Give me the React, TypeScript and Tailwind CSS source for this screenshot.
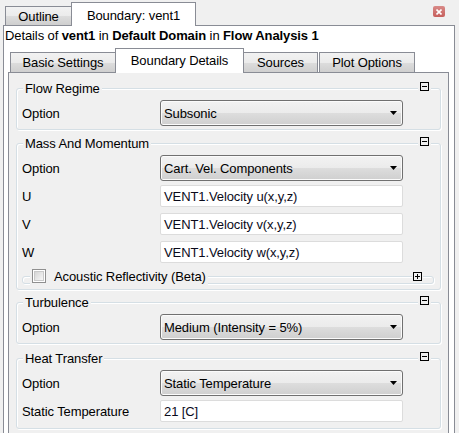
import React from "react";

function MinusIcon() {
  return (
    <svg width="9" height="9" viewBox="0 0 9 9" className="block">
      <rect x="0.5" y="0.5" width="8" height="8" fill="#f0f0f0" stroke="#000" />
      <path d="M2 4.5h5" stroke="#000" />
    </svg>
  );
}

function PlusIcon() {
  return (
    <svg width="9" height="9" viewBox="0 0 9 9" className="block">
      <rect x="0.5" y="0.5" width="8" height="8" fill="#f0f0f0" stroke="#000" />
      <path d="M2 4.5h5M4.5 2v5" stroke="#000" />
    </svg>
  );
}

function Select({ value }: { value: string }) {
  return (
    <div className="flex h-[26px] w-[243px] items-center rounded-[3px] border border-[#707070] bg-[linear-gradient(#f2f2f2,#ebebeb_50%,#dddddd_50%,#cfcfcf)] pl-[3px] shadow-[inset_0_0_0_1px_#fbfbfb]">
      <span className="pt-[1px] leading-[16px] text-black">{value}</span>
      <svg width="7" height="4" viewBox="0 0 7 4" className="ml-auto mr-[5px] block">
        <path d="M0 0h7L3.5 4z" fill="#000" />
      </svg>
    </div>
  );
}

function Input({ value }: { value: string }) {
  return (
    <div className="flex h-[22px] w-[243px] items-center rounded-[2px] border border-[#dcdcdc] bg-white pl-[3px]">
      <span className="pt-[1px] leading-[16px] text-[#0a0a1a]">{value}</span>
    </div>
  );
}

function Row({ label, children, className }: { label: string; children: React.ReactNode; className?: string }) {
  return (
    <div className={"flex items-center " + (className ?? "")}>
      <span className="w-[138px] pt-[1px] leading-[16px]">{label}</span>
      {children}
    </div>
  );
}

function Group({
  title,
  children,
  className,
}: {
  title: string;
  children: React.ReactNode;
  className: string;
}) {
  return (
    <div className={"relative rounded-[3px] border border-[#d5dfe5] shadow-[inset_1px_1px_0_#ffffff,1px_1px_0_#ffffff] " + className}>
      <span className="absolute left-[6px] top-[-8px] bg-[#f0f0f0] px-[2px] leading-[16px] text-black">{title}</span>
      <span className="absolute right-[9px] top-[-7px] bg-[#f0f0f0] px-[2px]">
        <MinusIcon />
      </span>
      {children}
    </div>
  );
}

const TAB_BG = "bg-[linear-gradient(#f2f2f2,#ebebeb_50%,#dddddd_50%,#cfcfcf)]";

export default function App() {
  return (
    <div className="h-[433px] w-[459px] overflow-hidden bg-[#f0f0f0] font-['Liberation_Sans',Arial,sans-serif] text-[13px] tracking-[-0.1px] text-black">
      {/* top tab bar */}
      <div className="flex h-[25px] items-end pl-[5px]">
        <div className={"flex h-[19px] w-[67px] items-center justify-center border border-b-0 border-[#898c95] pt-[1px] leading-[16px] " + TAB_BG}>
          Outline
        </div>
        <div className="relative z-10 -mb-[1px] ml-[-1px] flex h-[24px] w-[125px] items-start justify-center border border-b-0 border-[#898c95] bg-white pt-[5px] leading-[16px]">
          Boundary: vent1
        </div>
        <div className="mb-auto ml-auto mr-[14px] mt-[6px] flex h-[11px] w-[12px] items-center justify-center rounded-[2px] bg-[linear-gradient(#d88a88,#c75f5c)]">
          <svg width="6" height="6" viewBox="0 0 6 6" className="block">
            <path d="M0.5 0.5l5 5M5.5 0.5l-5 5" stroke="#fff" strokeWidth="1.6" />
          </svg>
        </div>
      </div>

      {/* outer pane */}
      <div className="ml-[3px] h-[420px] w-[452px] border border-[#898c95] bg-white">
        <div className="pl-[1px] pt-[2px] leading-[16px]">
          Details of <b>vent1</b> in <b>Default Domain</b> in <b>Flow Analysis 1</b>
        </div>

        {/* inner tabs */}
        <div className="mt-[4px] flex h-[24px] items-end pl-[6px]">
          <div className={"flex h-[20px] w-[106px] items-center justify-center border border-b-0 border-[#898c95] pt-[1px] leading-[16px] " + TAB_BG}>
            Basic Settings
          </div>
          <div className="relative z-10 -mb-[1px] ml-[-1px] flex h-[25px] w-[129px] items-start justify-center border border-b-0 border-[#898c95] bg-white pt-[4px] leading-[16px]">
            Boundary Details
          </div>
          <div className={"ml-[-1px] flex h-[20px] w-[75px] items-center justify-center border border-b-0 border-[#898c95] pt-[1px] leading-[16px] " + TAB_BG}>
            Sources
          </div>
          <div className={"ml-[1px] flex h-[20px] w-[96px] items-center justify-center border border-b-0 border-[#898c95] pt-[1px] leading-[16px] " + TAB_BG}>
            Plot Options
          </div>
        </div>

        {/* inner pane */}
        <div className="ml-[4px] h-[380px] w-[441px] border border-[#898c95] bg-[#f0f0f0] px-[7px] pt-[15px]">
          <Group title="Flow Regime" className="pb-[3px] pl-[5px] pt-[11px]">
            <Row label="Option">
              <Select value="Subsonic" />
            </Row>
          </Group>

          <Group title="Mass And Momentum" className="mt-[13px] pb-[5px] pl-[5px] pt-[11px]">
            <Row label="Option">
              <Select value="Cart. Vel. Components" />
            </Row>
            <Row label="U" className="mt-[4px]">
              <Input value="VENT1.Velocity u(x,y,z)" />
            </Row>
            <Row label="V" className="mt-[6px]">
              <Input value="VENT1.Velocity v(x,y,z)" />
            </Row>
            <Row label="W" className="mt-[6px]">
              <Input value="VENT1.Velocity w(x,y,z)" />
            </Row>
            <div className="relative mr-[6px] mt-[5px] h-[16px]">
              <div className="absolute bottom-0 left-0 right-0 top-[8px] rounded-[3px] border border-[#d5dfe5] shadow-[inset_1px_1px_0_#ffffff,1px_1px_0_#ffffff]" />
              <div className="relative flex h-[16px] items-center pl-[8px]">
                <span className="flex items-center bg-[#f0f0f0] px-[2px]">
                  <span className="flex h-[14px] w-[14px] items-center justify-center border border-[#8f8f8f] bg-white">
                    <span className="h-[10px] w-[10px] border border-[#c9c9c9] bg-[linear-gradient(135deg,#d6d6d6,#f6f6f6)]" />
                  </span>
                  <span className="ml-[8px] pt-[1px] leading-[16px]">Acoustic Reflectivity (Beta)</span>
                </span>
              </div>
              <span className="absolute right-[11px] top-[4px] bg-[#f0f0f0] px-[1px]">
                <PlusIcon />
              </span>
            </div>
          </Group>

          <Group title="Turbulence" className="mt-[12px] pb-[3px] pl-[5px] pt-[11px]">
            <Row label="Option">
              <Select value="Medium (Intensity = 5%)" />
            </Row>
          </Group>

          <Group title="Heat Transfer" className="mt-[14px] pb-[6px] pl-[5px] pt-[11px]">
            <Row label="Option">
              <Select value="Static Temperature" />
            </Row>
            <Row label="Static Temperature" className="mt-[4px]">
              <Input value="21 [C]" />
            </Row>
          </Group>
        </div>
      </div>
    </div>
  );
}
